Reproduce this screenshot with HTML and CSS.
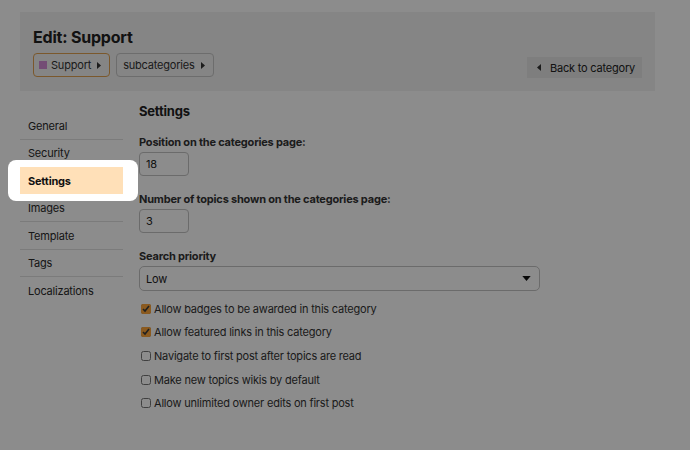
FILE: index.html
```html
<!DOCTYPE html>
<html lang="en">
<head>
<meta charset="utf-8">
<title>Edit: Support</title>
<link rel="stylesheet" href="styles.css">
</head>
<body>
<div class="page">
  <header class="edit-header">
    <h2 class="title">Edit: Support</h2>
    <div class="header-row">
      <div class="crumbs">
        <button class="crumb crumb-active"><span class="cat-square"></span>Support<svg class="caret" viewBox="0 0 4 7" width="4" height="7"><path d="M0 0 L4 3.5 L0 7 Z" fill="#333"/></svg></button>
        <button class="crumb crumb-sub">subcategories<svg class="caret" viewBox="0 0 4 7" width="4" height="7"><path d="M0 0 L4 3.5 L0 7 Z" fill="#333"/></svg></button>
      </div>
      <button class="back-btn"><svg class="back-caret" viewBox="0 0 4 7" width="4" height="7"><path d="M4 0 L0 3.5 L4 7 Z" fill="#333"/></svg>Back to category</button>
    </div>
  </header>

  <div class="content">
    <ul class="side-nav">
      <li class="nav-item"><span class="nav-link">General</span></li>
      <li class="nav-item"><span class="nav-link">Security</span></li>
      <li class="nav-item nav-spot"><span class="nav-link nav-active">Settings</span></li>
      <li class="nav-item"><span class="nav-link">Images</span></li>
      <li class="nav-item"><span class="nav-link">Template</span></li>
      <li class="nav-item"><span class="nav-link">Tags</span></li>
      <li class="nav-item nav-last"><span class="nav-link">Localizations</span></li>
    </ul>

    <section class="settings">
      <h3 class="section-title">Settings</h3>

      <label class="field-label">Position on the categories page:</label>
      <input class="num-input" type="text" value="18">

      <label class="field-label">Number of topics shown on the categories page:</label>
      <input class="num-input" type="text" value="3">

      <label class="field-label">Search priority</label>
      <div class="select-box">
        <span class="select-value">Low</span>
        <svg class="select-caret" viewBox="0 0 10 6" width="9" height="5"><path d="M0 0 L10 0 L5 6 Z" fill="#111"/></svg>
      </div>

      <div class="checks">
        <label class="check-row"><input type="checkbox" class="cb" checked>Allow badges to be awarded in this category</label>
        <label class="check-row"><input type="checkbox" class="cb" checked>Allow featured links in this category</label>
        <label class="check-row"><input type="checkbox" class="cb">Navigate to first post after topics are read</label>
        <label class="check-row"><input type="checkbox" class="cb">Make new topics wikis by default</label>
        <label class="check-row"><input type="checkbox" class="cb">Allow unlimited owner edits on first post</label>
      </div>
    </section>
  </div>
</div>
</body>
</html>
```

FILE: styles.css
```css
* { box-sizing: border-box; }

html, body {
  margin: 0;
  padding: 0;
  background: #fff;
  font-family: Inter, "Noto Sans", sans-serif;
  letter-spacing: -0.2px;
  color: #222;
  overflow: hidden;
}

.page {
  width: 690px;
  height: 450px;
  padding: 12px 35px 0 20px;
}

.edit-header {
  background: #f2f2f2;
  padding: 15px 13px 14px 13px;
}

.title {
  margin: 0;
  font-size: 16px;
  line-height: 20px;
  font-weight: 700;
  color: #222;
}

.header-row {
  margin-top: 6px;
  display: flex;
  justify-content: space-between;
  align-items: flex-end;
}

.crumbs {
  display: flex;
  gap: 6px;
}

.crumb {
  display: flex;
  align-items: center;
  height: 24px;
  padding: 0 8px 0 5px;
  border: 1px solid #c6c6c6;
  border-radius: 4px;
  background: #f2f2f2;
  font-family: inherit;
  letter-spacing: inherit;
  font-size: 11px;
  color: #333;
}

.crumb-sub { padding-left: 6px; }

.crumb-active {
  border-color: #e0a050;
}

.cat-square {
  width: 8px;
  height: 8px;
  background: #d48cd6;
  margin-right: 4px;
}

.caret {
  margin-left: 6px;
}

.back-btn {
  display: flex;
  align-items: center;
  height: 21px;
  margin-bottom: -1px;
  padding: 0 7px 0 10px;
  border: none;
  background: #e6e6e6;
  font-family: inherit;
  letter-spacing: inherit;
  font-size: 11px;
  color: #222;
}

.back-caret { margin-right: 9px; }

.content {
  display: flex;
  gap: 16px;
  margin-top: 12px;
}

.side-nav {
  list-style: none;
  margin: 9px 0 0 0;
  padding: 0;
  width: 103px;
  flex: none;
}

.nav-item {
  border-bottom: 1px solid #e0e0e0;
}

.nav-last { border-bottom: none; }

.nav-link {
  display: block;
  padding: 7.5px 8px 6px 8px;
  font-size: 11px;
  line-height: 13px;
  color: #2a2a2a;
}

.nav-spot {
  position: relative;
  z-index: 1;
}

.nav-spot::before {
  content: "";
  position: absolute;
  top: -7px;
  bottom: -7px;
  left: -12px;
  right: -15px;
  background: #fff;
  border-radius: 8px;
  box-shadow: 0 0 0 3000px rgba(0, 0, 0, 0.45);
  z-index: -1;
}

.nav-active {
  background: #ffe0b8;
  font-weight: 700;
  color: #111;
}

.settings {
  flex: 1;
  display: flex;
  flex-direction: column;
  align-items: flex-start;
}

.section-title {
  margin: 0;
  font-size: 13px;
  line-height: 16px;
  font-weight: 700;
  color: #222;
}

.field-label {
  margin-top: 16px;
  margin-bottom: 3px;
  font-size: 11px;
  line-height: 14px;
  font-weight: 700;
  color: #333;
}

.num-input {
  width: 50px;
  height: 24px;
  border: 1px solid #c4c4c4;
  border-radius: 4px;
  padding: 0 6px;
  font-family: inherit;
  letter-spacing: inherit;
  font-size: 11px;
  color: #222;
  background: #fff;
}

.select-box {
  width: 401px;
  height: 25px;
  border: 1px solid #c4c4c4;
  border-radius: 5px;
  display: flex;
  align-items: center;
  justify-content: space-between;
  padding: 0 8px 0 6px;
  font-size: 11px;
  color: #222;
}

.checks {
  margin-top: 6px;
  display: flex;
  flex-direction: column;
}

.check-row {
  display: flex;
  align-items: center;
  height: 23.6px;
  font-size: 11px;
  color: #333;
}

.cb {
  width: 10px;
  height: 10px;
  margin: 0 3px 0 2px;
  accent-color: #fda53a;
}
```
